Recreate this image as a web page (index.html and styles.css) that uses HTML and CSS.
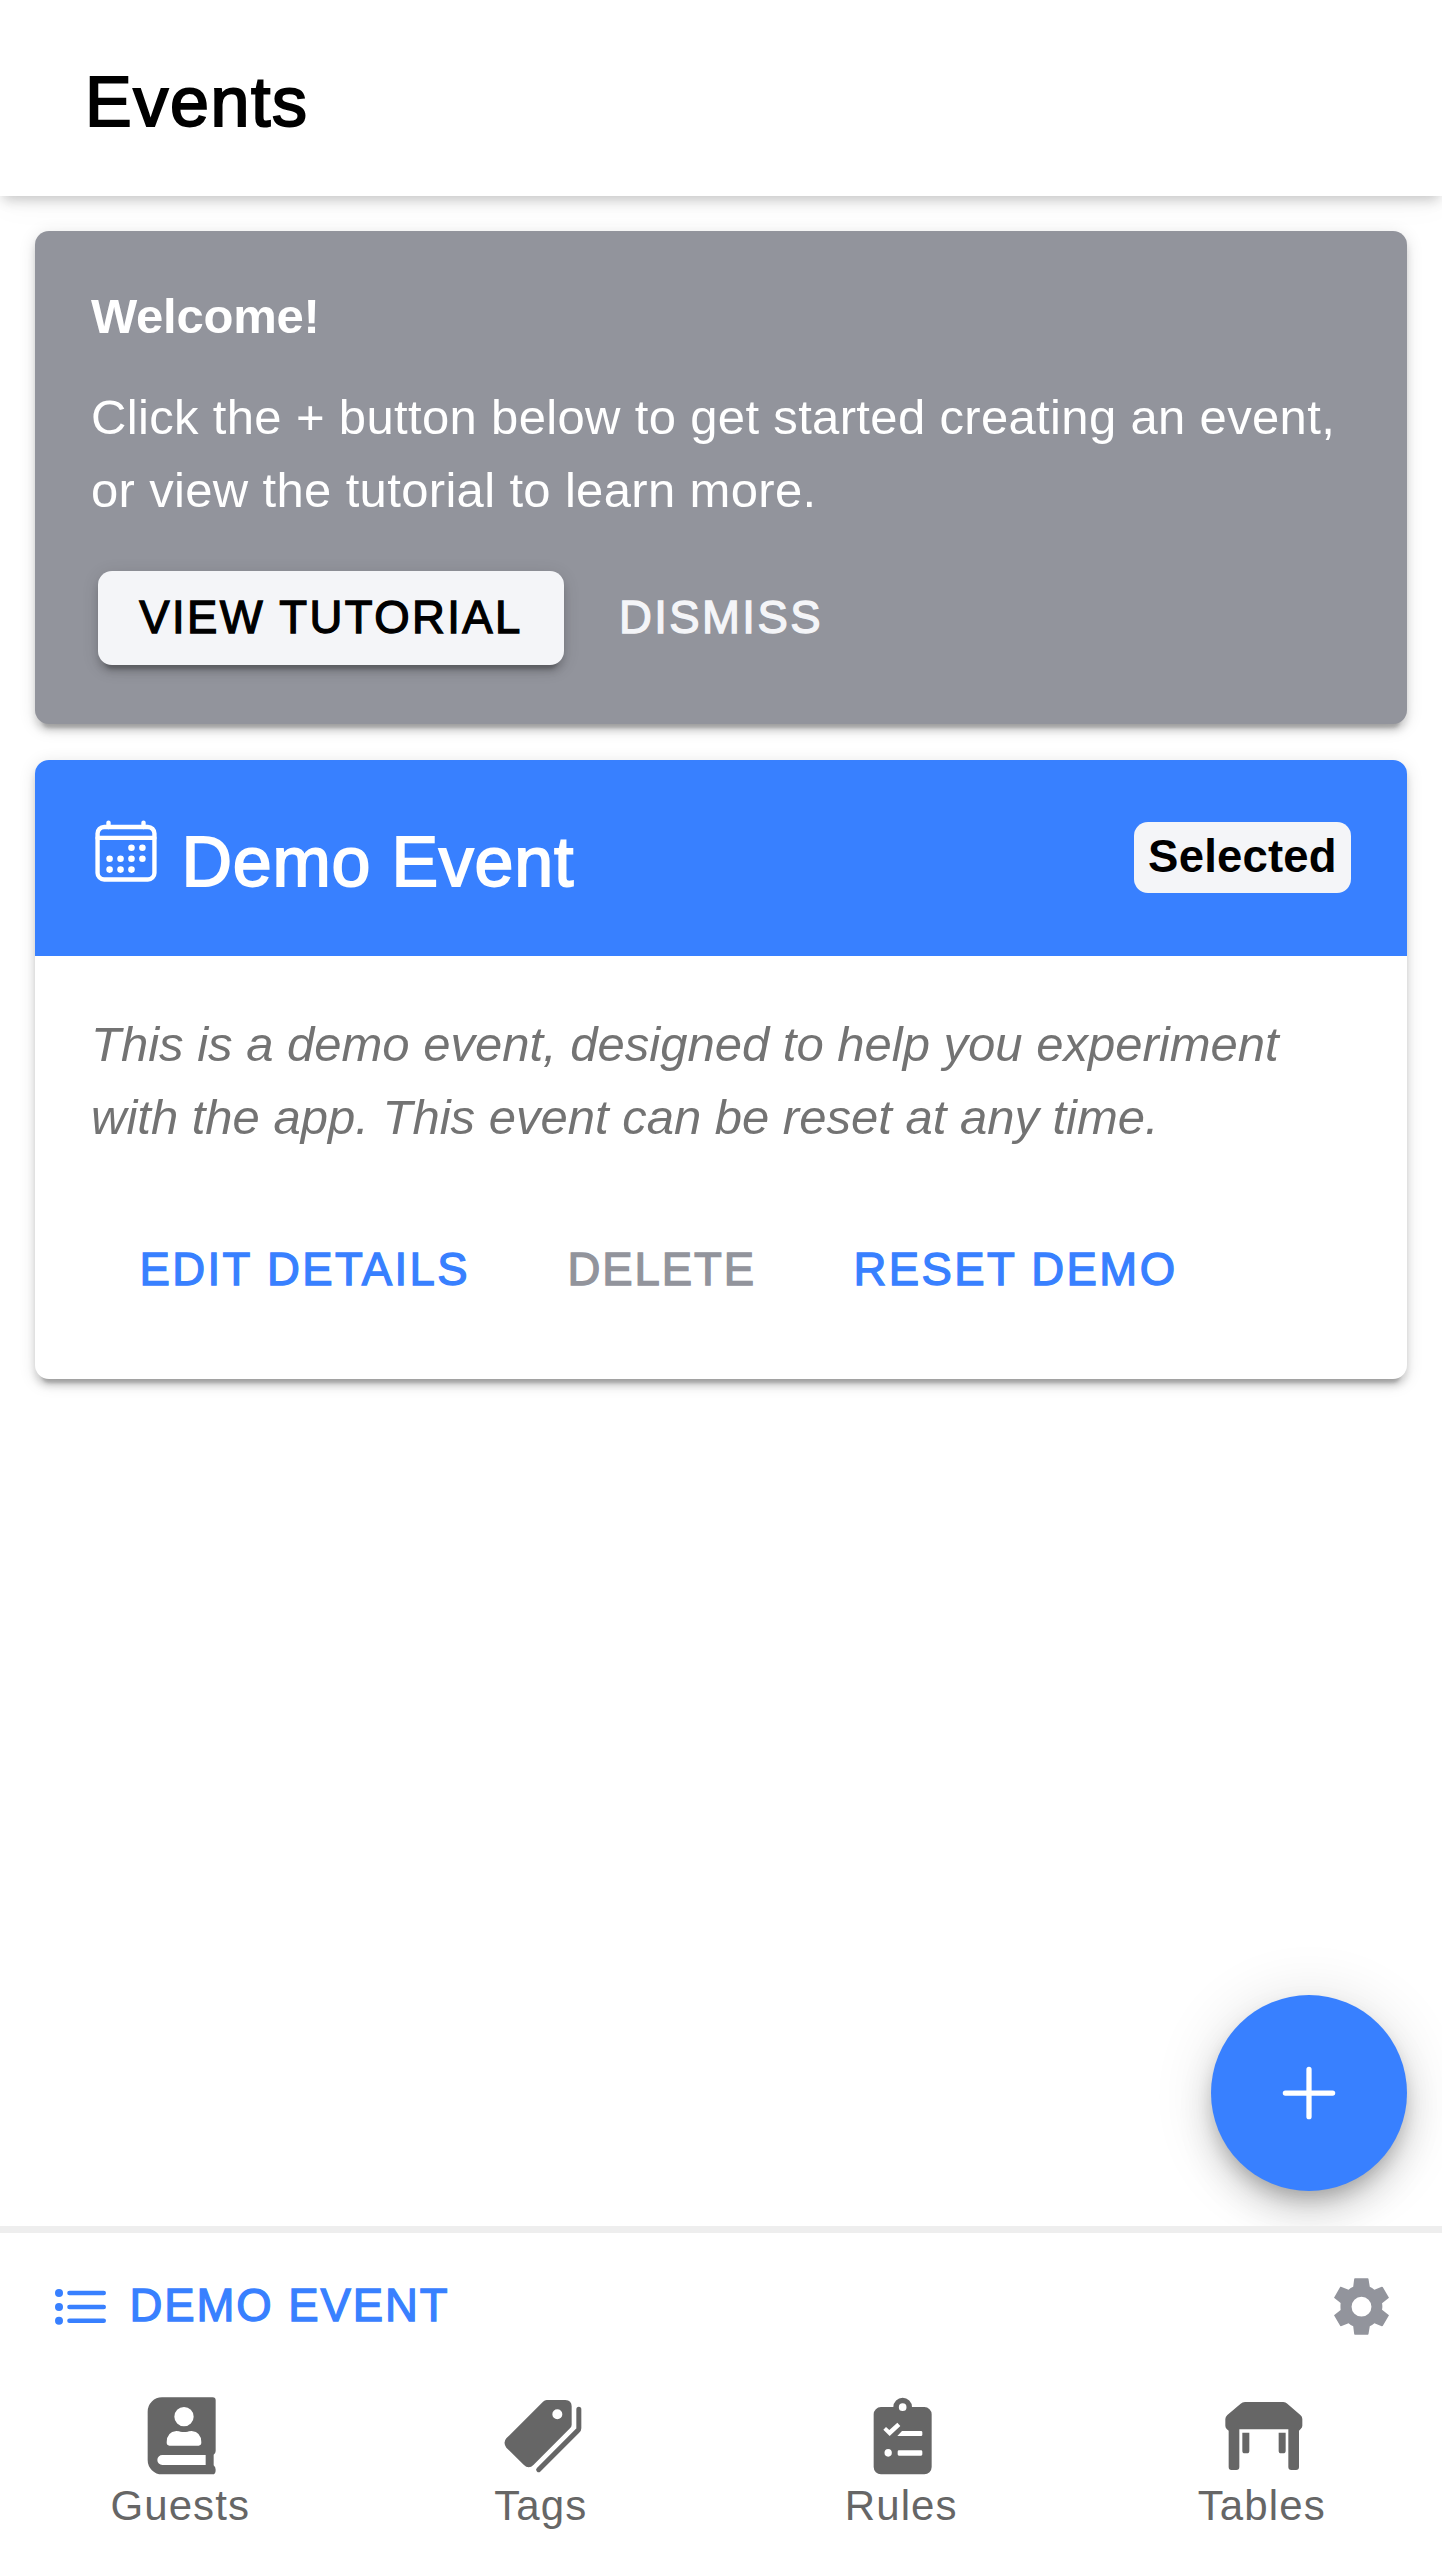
FILE: index.html
```
<!DOCTYPE html>
<html lang="en">
<head>
    <meta charset="UTF-8">
    <meta name="viewport" content="width=device-width, initial-scale=1.0">
    <title>Events</title>
    <link rel="stylesheet" href="styles.css">
</head>
<body>
    <header class="toolbar">
        <h1>Events</h1>
    </header>

    <main class="content">
        <section class="card welcome">
            <h3>Welcome!</h3>
            <p>Click the + button below to get started creating an event,<br>or view the tutorial to learn more.</p>
            <div class="welcome-actions">
                <button class="btn btn-solid">VIEW TUTORIAL</button>
                <button class="btn btn-light">DISMISS</button>
            </div>
        </section>

        <section class="card event">
            <div class="event-header">
                <svg class="calendar" viewBox="0 0 512 512" fill="none" stroke="currentColor" stroke-width="32" stroke-linecap="round">
                    <rect x="48" y="80" width="416" height="384" rx="48"/>
                    <path d="M128 48v32M384 48v32M464 160H48"/>
                    <g fill="currentColor" stroke="none">
                        <circle cx="296" cy="232" r="24"/>
                        <circle cx="376" cy="232" r="24"/>
                        <circle cx="136" cy="312" r="24"/>
                        <circle cx="216" cy="312" r="24"/>
                        <circle cx="296" cy="312" r="24"/>
                        <circle cx="376" cy="312" r="24"/>
                        <circle cx="136" cy="392" r="24"/>
                        <circle cx="216" cy="392" r="24"/>
                        <circle cx="296" cy="392" r="24"/>
                    </g>
                </svg>
                <h2>Demo Event</h2>
                <span class="badge">Selected</span>
            </div>
            <p class="description">This is a demo event, designed to help you experiment<br>with the app. This event can be reset at any time.</p>
            <div class="event-actions">
                <button class="btn">EDIT DETAILS</button>
                <button class="btn btn-disabled">DELETE</button>
                <button class="btn">RESET DEMO</button>
            </div>
        </section>

        <button class="fab" aria-label="Add event">
            <svg viewBox="0 0 512 512" fill="none" stroke="currentColor" stroke-width="32" stroke-linecap="round">
                <path d="M256 112v288M400 256H112"/>
            </svg>
        </button>
    </main>

    <footer class="footer">
        <div class="current">
            <svg class="list" viewBox="0 0 51 36" stroke="currentColor" stroke-width="4.6" stroke-linecap="round">
                <path d="M14.5 4H48.7M14.5 18H48.7M14.5 31.8H48.7"/>
                <g fill="currentColor" stroke="none">
                    <circle cx="4" cy="4" r="4"/>
                    <circle cx="4" cy="18" r="4"/>
                    <circle cx="4" cy="31.8" r="4"/>
                </g>
            </svg>
            <button class="btn">DEMO EVENT</button>
            <svg class="gear" viewBox="552 144 166 171">
                <path fill="currentColor" fill-rule="evenodd" d="M615 144H654L656 146 660 170Q667 173 674 179L696 170 699 171 718 203 697 220Q699 230 697 239L718 256 699 288 696 289 674 280Q667 286 660 289L656 313 654 315H615L613 313 610 289Q602 286 596 280L573 289 571 288 552 256 572 240Q571 230 572 219L552 203 571 170 573 170 596 179Q602 173 610 170L613 146Z M635 200A30 30 0 1 0 635 260A30 30 0 1 0 635 200Z"/>
            </svg>
        </div>

        <nav class="tabs">
            <a class="tab">
                <svg viewBox="415 552 252 252" fill="currentColor">
                    <path fill-rule="evenodd" d="M487 562H639Q648 562 648 571V723Q648 730 642 734V766Q648 771 648 779Q648 793 639 793H487A43 43 0 0 1 444 750V605A43 43 0 0 1 487 562ZM553 591A29 29 0 1 0 553 649A29 29 0 1 0 553 591ZM530 663Q501 666 501 697Q501 707 509 707H597Q605 707 605 697Q605 666 576 663Q566 663 564 665Q553 667 542 665Q540 663 530 663ZM488 735A14.500 14.500 0 0 0 488 765H618V735Z"/>
                </svg>
                <span>Guests</span>
            </a>
            <a class="tab">
                <svg viewBox="116 102 252 252" fill="currentColor">
                    <path fill-rule="evenodd" d="M259 120H315Q334 121 334 139V194Q334 200 329 205L220 314Q205 329 190 314L138 263Q127 248 138 235L248 125Q253 120 259 120ZM291 148A15 15 0 1 0 291 178A15 15 0 1 0 291 148Z"/>
                    <path d="M355.500 148V205Q355.500 209 352 212L235 329" fill="none" stroke="currentColor" stroke-width="15" stroke-linecap="round"/>
                </svg>
                <span>Tags</span>
            </a>
            <a class="tab">
                <svg viewBox="178 102 252 252" fill="currentColor">
                    <path fill-rule="evenodd" d="M281 141A28 28 0 0 1 337 141H374A22 22 0 0 1 396 163V321A22 22 0 0 1 374 343H244A22 22 0 0 1 222 321V163A22 22 0 0 1 244 141ZM309 130A11.500 11.500 0 1 0 309 153A11.500 11.500 0 1 0 309 130ZM251 209L259 201 269 210 293 188 302 198 270 228ZM293 228L307 213H364Q368 213 368 217V224Q368 228 364 228ZM298 271H364Q368 271 368 275V283Q368 287 364 287H298Q294 287 294 283V275Q294 271 298 271ZM265.500 267A11 11.500 0 1 0 265.500 290A11 11.500 0 1 0 265.500 267Z"/>
                </svg>
                <span>Rules</span>
            </a>
            <a class="tab">
                <svg viewBox="209 492 252 252" fill="currentColor">
                    <path d="M284 516H399Q406 516 411 521L450 555Q456 560 456 567V587Q456 593 451 597L446 602V711Q446 720 437 720H423Q414 720 414 711V598H267V711Q267 720 258 720H243Q235 720 235 711V602L229 597Q225 593 225 587V567Q225 561 231 555L271 521Q276 516 284 516Z"/>
                    <path d="M276 608H297V662Q297 670 290 670H283Q276 670 276 662ZM385 608H406V662Q406 670 398 670H392Q385 670 385 662Z"/>
                </svg>
                <span>Tables</span>
            </a>
        </nav>
    </footer>
</body>
</html>
```

FILE: styles.css
```
* {
    margin: 0;
    padding: 0;
    box-sizing: border-box;
}

body {
    font-family: "Liberation Sans", Arial, sans-serif;
    font-size: 49px;
    line-height: 73.5px;
    background-color: #fff;
    height: 2562px;
    display: flex;
    flex-direction: column;
    overflow: hidden;
}

svg {
    display: block;
    flex: none;
}

.toolbar {
    height: 196px;
    padding: 10px 85px 0;
    display: flex;
    align-items: center;
    background-color: #fff;
    box-shadow: 0 7px 12px -3px rgba(0, 0, 0, 0.2), 0 3px 35px rgba(0, 0, 0, 0.05);
}

.toolbar h1 {
    font-size: 70px;
    font-weight: normal;
    letter-spacing: 1.6px;
    color: #000;
    -webkit-text-stroke: 2px #000;
}

.content {
    flex: 1;
    position: relative;
    padding: 35px;
    overflow: hidden;
}

/* Cards */
.card {
    border-radius: 14px;
    box-shadow: 0 10.5px 3.5px -7px rgba(0, 0, 0, 0.2), 0 7px 7px rgba(0, 0, 0, 0.14), 0 3.5px 17.5px rgba(0, 0, 0, 0.12);
}

.welcome {
    height: 493px;
    padding: 49px 56px;
    margin-bottom: 35.5px;
    background-color: #92949c;
    color: #fff;
}

.welcome h3 {
    font-size: 49px;
    font-weight: bold;
    letter-spacing: -0.25px;
    margin-bottom: 27px;
}

.welcome p {
    letter-spacing: 0.34px;
    white-space: nowrap;
}

.welcome-actions {
    display: flex;
    align-items: center;
    gap: 55px;
    margin: 43px 0 0 7px;
}

.btn {
    border: none;
    background: none;
    font-family: inherit;
    font-size: 45.5px;
    line-height: 60px;
    letter-spacing: 2.4px;
    color: #3880ff;
    white-space: nowrap;
    -webkit-text-stroke: 1.3px currentColor;
}

.btn-solid {
    width: 466px;
    height: 94.5px;
    padding-top: 1px;
    border-radius: 14px;
    background-color: #f4f5f8;
    color: #000;
    box-shadow: 0 10.5px 3.5px -7px rgba(0, 0, 0, 0.2), 0 7px 7px rgba(0, 0, 0, 0.14), 0 3.5px 17.5px rgba(0, 0, 0, 0.12);
}

.btn-light {
    padding-top: 1px;
    color: #f4f5f8;
}

.btn-disabled {
    letter-spacing: 1.9px;
    color: #92949c;
}

.event {
    height: 619.5px;
    overflow: hidden;
    background-color: #fff;
}

.event-header {
    height: 196px;
    padding: 0 56px;
    display: flex;
    align-items: center;
    background-color: #3880ff;
    color: #fff;
}

.calendar {
    width: 70px;
    height: 70px;
    margin-bottom: 14px;
}

.event-header h2 {
    font-size: 70px;
    font-weight: normal;
    letter-spacing: 0.75px;
    margin: 11px auto 0 20.5px;
    -webkit-text-stroke: 1.8px #fff;
}

.badge {
    width: 217px;
    height: 71px;
    border-radius: 14px;
    background-color: #f4f5f8;
    color: #000;
    font-size: 45.5px;
    font-weight: bold;
    line-height: 70px;
    letter-spacing: 0.2px;
    text-align: center;
}

.description {
    padding: 52px 56px 0;
    font-style: italic;
    line-height: 73px;
    color: #737373;
    white-space: nowrap;
}

.event-actions {
    display: flex;
    gap: 97.5px;
    margin: 86px 0 0 104.5px;
}

.fab {
    position: absolute;
    right: 35px;
    bottom: 35px;
    width: 196px;
    height: 196px;
    display: flex;
    align-items: center;
    justify-content: center;
    border: none;
    border-radius: 50%;
    background-color: #3880ff;
    color: #fff;
    box-shadow: 0 10.5px 17.5px -3.5px rgba(0, 0, 0, 0.2), 0 21px 35px rgba(0, 0, 0, 0.14), 0 3.5px 63px rgba(0, 0, 0, 0.12);
}

.fab svg {
    width: 84px;
    height: 84px;
}

/* Footer */
.footer {
    height: 336px;
    border-top: 7px solid #eee;
    background-color: #fff;
}

.current {
    height: 147px;
    padding: 0 53px 0 55px;
    display: flex;
    align-items: center;
}

.current .btn {
    letter-spacing: 1.9px;
    margin: 0 auto 2px 23.5px;
}

.list {
    width: 51px;
    height: 36px;
    color: #3880ff;
}

.gear {
    width: 55px;
    height: 57px;
    color: #92949c;
}

.tabs {
    display: flex;
    padding-top: 14px;
}

.tab {
    flex: 1;
    display: flex;
    flex-direction: column;
    align-items: center;
    color: #666;
    font-size: 42px;
    line-height: 50px;
    letter-spacing: 1.1px;
}

.tab svg {
    width: 84px;
    height: 84px;
    margin-bottom: 3px;
}
```
